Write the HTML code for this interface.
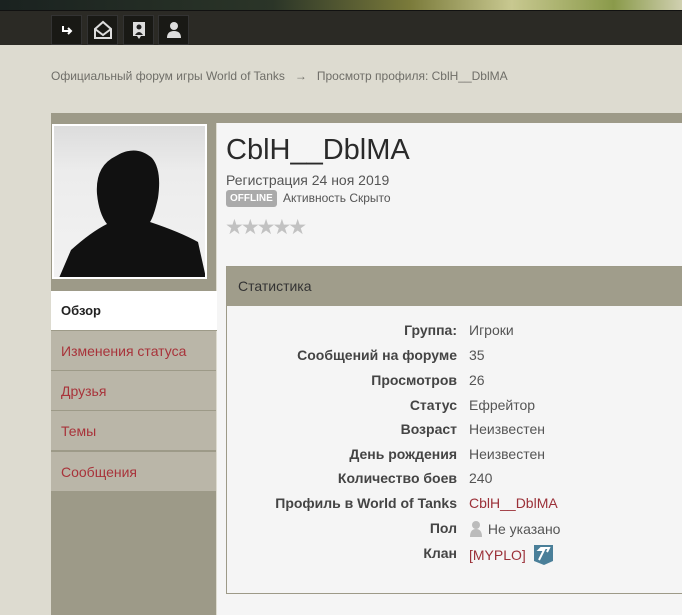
<!DOCTYPE html><html><head><meta charset="utf-8"><style>
*{margin:0;padding:0;box-sizing:border-box}
body{width:682px;height:615px;overflow:hidden;background:#dddbd0;font-family:"Liberation Sans",Arial,sans-serif;position:relative}
.ban{position:absolute;left:0;top:0;width:682px;height:10px;background:linear-gradient(90deg,#1a2220 0%,#2b3528 40%,#7a7a3a 60%,#c8c890 75%,#8a9a4a 90%,#d0d0b0 100%)}
.nav{position:absolute;left:0;top:10px;width:682px;height:35px;background:#2b2a25;border-top:1px solid #111}
.ic{position:absolute;top:4px;width:31px;height:30px;background:#191915;border:1px solid #333;display:flex;align-items:center;justify-content:center}
.crumb{position:absolute;left:51px;top:69px;font-size:12px;color:#6f6e68}
.strip{position:absolute;left:51px;top:113px;width:631px;height:10px;background:#9d9a88}
.side{position:absolute;left:51px;top:123px;width:165px;height:492px;background:#9d9a88}
.av{position:absolute;left:52px;top:124px;width:155px;height:155px;background:linear-gradient(#dcdcdc,#ececec 30%,#f2f2f2);border:2px solid #fff;overflow:hidden}
.menu{position:absolute;left:51px;width:165px;height:40px;background:#bab6a8;border-bottom:1px solid #9d9a88;font-size:14px;color:#a8333a;padding:12px 0 0 10px}
.main{position:absolute;left:217px;top:123px;width:465px;height:492px;background:#f5f5f5}
h1{position:absolute;left:226px;top:134px;font-size:29px;font-weight:normal;color:#2a2a2a}
.reg{position:absolute;left:226px;top:172px;font-size:14px;color:#555}
.off{position:absolute;left:226px;top:190px;background:#aaa;color:#fff;font-size:10px;font-weight:bold;padding:3px 4px;border-radius:3px}
.act{position:absolute;left:283px;top:191px;font-size:12px;color:#555}
.stars{position:absolute;left:225px;top:215px;font-size:21px;color:#c2c2c2;letter-spacing:-3px}
.box{position:absolute;left:226px;top:266px;width:460px;height:328px;border:1px solid #9d9a88}
.bh{height:39px;background:#a09d8b;font-size:14px;color:#333;padding:11px 0 0 11px}
.row{position:absolute;left:226px;width:456px;height:20px;font-size:14px}
.row b{position:absolute;right:225px;color:#444;font-weight:bold}
.row span{position:absolute;left:243px;color:#555}
.r{color:#9b3038!important}
</style></head><body>
<div class="ban"></div>
<div class="nav">
<div class="ic" style="left:51px"><svg width="12" height="10"><path d="M2 1v5h8M7 3l3 3-3 3" stroke="#fff" stroke-width="2" fill="none"/></svg></div>
<div class="ic" style="left:87px"><svg width="20" height="20"><path d="M2 9l8-7 8 7v9H2z M2 9l8 6 8-6" stroke="#ddd" stroke-width="2" fill="none"/></svg></div>
<div class="ic" style="left:123px"><svg width="14" height="20"><rect x="1" y="2" width="12" height="14" fill="#ddd"/><circle cx="7" cy="7" r="2.5" fill="#222"/><path d="M3 15q4-6 8 0z" fill="#222"/><path d="M5 16l2 3 2-3" fill="#ddd"/></svg></div>
<div class="ic" style="left:158px"><svg width="16" height="18"><circle cx="8" cy="5" r="4" fill="#ddd"/><path d="M1 17q0-7 7-7t7 7z" fill="#ddd"/></svg></div>
</div>
<div class="crumb">Официальный форум игры World of Tanks &nbsp;&nbsp;→&nbsp;&nbsp; Просмотр профиля: CblH__DblMA</div>
<div class="strip"></div>
<div class="side"></div>
<div class="av"><svg width="151" height="151" viewBox="0 0 151 151"><path d="M62 30q20-12 36 2q10 12 6 40q-4 18 -8 24q30 10 48 20l8 36H5l12-28q20-18 36-26q-8-10-10-30q-2-28 19-38z" fill="#111"/></svg></div>
<div class="menu" style="top:291px;background:#fff;color:#222;font-weight:bold;font-size:13px;border-bottom-color:#9d9a88;width:168px">Обзор</div>
<div class="menu" style="top:331px">Изменения статуса</div>
<div class="menu" style="top:371px">Друзья</div>
<div class="menu" style="top:411px">Темы</div>
<div class="menu" style="top:452px">Сообщения</div>
<div class="main"></div>
<h1>CblH__DblMA</h1>
<div class="reg">Регистрация 24 ноя 2019</div>
<div class="off">OFFLINE</div>
<div class="act">Активность Скрыто</div>
<div class="stars">★★★★★</div>
<div class="box"><div class="bh">Статистика</div></div>
<div class="row" style="top:322px"><b>Группа:</b><span>Игроки</span></div>
<div class="row" style="top:347px"><b>Сообщений на форуме</b><span>35</span></div>
<div class="row" style="top:372px"><b>Просмотров</b><span>26</span></div>
<div class="row" style="top:397px"><b>Статус</b><span>Ефрейтор</span></div>
<div class="row" style="top:421px"><b>Возраст</b><span>Неизвестен</span></div>
<div class="row" style="top:446px"><b>День рождения</b><span>Неизвестен</span></div>
<div class="row" style="top:470px"><b>Количество боев</b><span>240</span></div>
<div class="row" style="top:495px"><b>Профиль в World of Tanks</b><span class="r">CblH__DblMA</span></div>
<div class="row" style="top:520px"><b>Пол</b><span><svg width="15" height="17" style="vertical-align:-3px"><circle cx="7" cy="5" r="4" fill="#bbb"/><path d="M1 17q0-8 6-8t6 8z" fill="#bbb"/></svg> Не указано</span></div>
<div class="row" style="top:545px"><b>Клан</b><span class="r" style="top:2px">[MYPLO]</span><span style="left:308px;top:0"><svg width="19" height="20"><path d="M0 0h19v16l-9 4-10-4z" fill="#4a7f99"/><path d="M5 15l5-10h-5l2-2h8l-2 4" stroke="#fff" stroke-width="2" fill="none"/></svg></span></div>
</body></html>
